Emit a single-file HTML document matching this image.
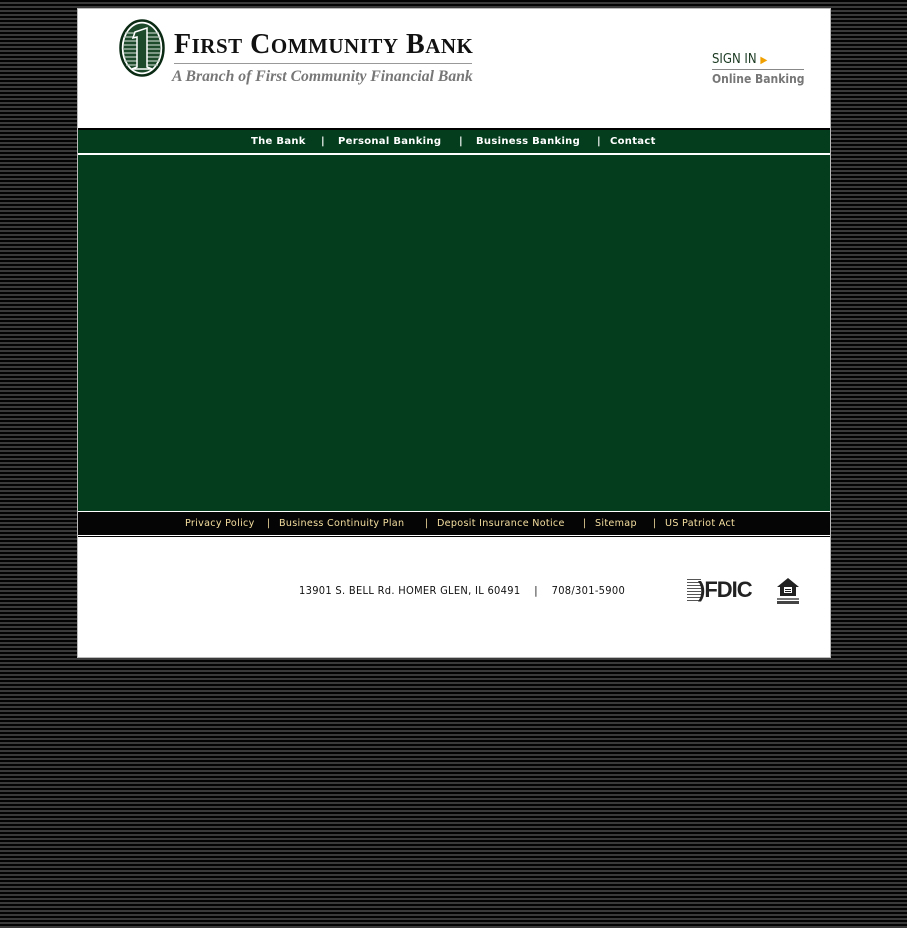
<!DOCTYPE html>
<html><head><style>
body{margin:0;width:907px;height:928px;background:repeating-linear-gradient(to bottom,#030303 0,#030303 2px,#3a3a3a 2px,#3a3a3a 4px);font-family:"Liberation Sans",sans-serif;position:relative;overflow:hidden}
.box{position:absolute;left:77px;top:8px;width:752px;height:648px;background:#fff;border:1px solid #bbb}
.abs{position:absolute}
.nav span,.fn span{position:absolute}
</style></head><body>
<div class="box">
 <svg class="abs" style="left:41px;top:10px" width="46" height="58" viewBox="0 0 46 58">
  <ellipse cx="23" cy="29" rx="21.5" ry="27.5" fill="#fff" stroke="#0a2a14" stroke-width="2.5"/>
  <ellipse cx="23" cy="29" rx="18.5" ry="24.5" fill="#1e4a2c"/>
  <g stroke="#b8c8bc" stroke-width="1.2">
   <line x1="6" y1="14" x2="40" y2="14"/><line x1="5" y1="18" x2="41" y2="18"/><line x1="5" y1="22" x2="41" y2="22"/><line x1="5" y1="26" x2="41" y2="26"/><line x1="5" y1="30" x2="41" y2="30"/><line x1="5" y1="34" x2="41" y2="34"/><line x1="5" y1="38" x2="41" y2="38"/><line x1="5" y1="42" x2="41" y2="42"/><line x1="7" y1="46" x2="39" y2="46"/>
  </g>
  <path d="M16 13 L28 9 L28 48 L33 50 L13 50 L18 48 L18 18 L14 19 Z" fill="#1e4a2c" stroke="#fff" stroke-width="1.5"/>
 </svg>
 <div class="abs" style="left:96px;top:20px;font-family:'Liberation Serif',serif;font-weight:bold;color:#111;font-size:28px;letter-spacing:0.5px;white-space:nowrap;line-height:32px">F<span style="font-size:21px">IRST</span> C<span style="font-size:21px">OMMUNITY</span> B<span style="font-size:21px">ANK</span></div>
 <div class="abs" style="left:96px;top:54px;width:298px;height:1px;background:#999"></div>
 <div class="abs" style="left:94px;top:59px;font-family:'Liberation Serif',serif;font-style:italic;font-weight:bold;color:#777;font-size:15.7px;white-space:nowrap">A Branch of First Community Financial Bank</div>
 <div class="abs" style="left:634px;top:43px;color:#1b3a22;font-size:13px;white-space:nowrap;font-family:'DejaVu Sans Condensed',sans-serif">SIGN IN <span style="color:#f0a000;font-size:10px">&#9654;</span></div>
 <div class="abs" style="left:634px;top:60px;width:92px;height:1px;background:#888"></div>
 <div class="abs" style="left:634px;top:63px;color:#777;font-size:12px;font-weight:bold;white-space:nowrap;font-family:'DejaVu Sans Condensed',sans-serif">Online Banking</div>
 <div class="abs" style="left:0;top:119px;width:752px;height:2px;background:#000"></div>
 <div class="abs nav" style="left:0;top:121px;width:752px;height:23px;background:#043d1d;color:#fff;font-size:10px;font-weight:bold;line-height:23px;white-space:nowrap;font-family:'DejaVu Sans',sans-serif;letter-spacing:0.3px">
  <span style="left:173px">The Bank</span><span style="left:243px">|</span><span style="left:260px">Personal Banking</span><span style="left:381px">|</span><span style="left:398px">Business Banking</span><span style="left:519px">|</span><span style="left:532px">Contact</span>
 </div>
 <div class="abs" style="left:0;top:146px;width:752px;height:356px;background:#043d1d"></div>
 <div class="abs fn" style="left:0;top:503px;width:752px;height:23px;background:#050505;color:#f5dfa0;font-size:9.6px;line-height:23px;white-space:nowrap;letter-spacing:0.3px;font-family:'DejaVu Sans',sans-serif">
  <span style="left:107px">Privacy Policy</span><span style="left:189px">|</span><span style="left:201px">Business Continuity Plan</span><span style="left:347px">|</span><span style="left:359px">Deposit Insurance Notice</span><span style="left:505px">|</span><span style="left:517px">Sitemap</span><span style="left:575px">|</span><span style="left:587px">US Patriot Act</span>
 </div>
 <div class="abs" style="left:0;top:527px;width:752px;height:1px;background:#000"></div>
 <div class="abs" style="left:221px;top:575px;font-size:11px;color:#111;white-space:nowrap;letter-spacing:0.3px;font-family:'DejaVu Sans Condensed','Liberation Sans',sans-serif">13901 S. BELL Rd. HOMER GLEN, IL 60491 &nbsp;&nbsp; | &nbsp;&nbsp; 708/301-5900</div>
 <div class="abs" style="left:609px;top:570px;width:14px;height:24px;background:repeating-linear-gradient(to bottom,#555 0 1px,#fff 1px 3px)"></div>
 <div class="abs" style="left:620px;top:568px;font-size:22px;font-weight:bold;color:#222;letter-spacing:-1px;line-height:26px">)FDIC</div>
 <svg class="abs" style="left:698px;top:568px" width="24" height="28" viewBox="0 0 24 28">
  <path d="M12 1 L23 10 L20 10 L20 19 L4 19 L4 10 L1 10 Z" fill="#222"/>
  <rect x="8" y="10" width="8" height="6" fill="#fff"/><rect x="9" y="12" width="6" height="1" fill="#222"/><rect x="9" y="14" width="6" height="1" fill="#222"/>
  <rect x="1" y="21" width="22" height="2" fill="#777"/><rect x="1" y="24" width="22" height="3" fill="#444"/>
 </svg>
</div>
</body></html>
